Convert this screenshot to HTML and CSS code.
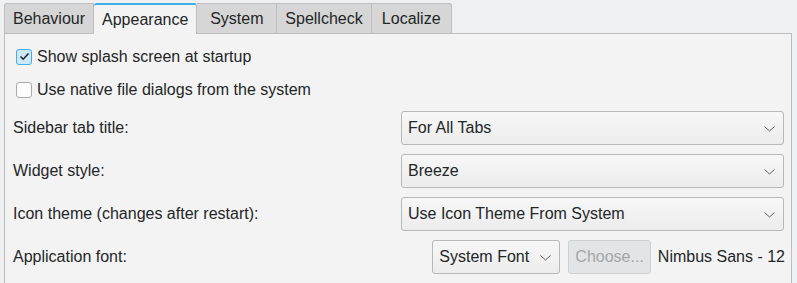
FILE: index.html
```html
<!DOCTYPE html>
<html lang="en">
<head>
    <meta charset="UTF-8">
    <title>Settings - Appearance</title>
    <link rel="stylesheet" href="styles.css">
</head>
<body>
    <div class="tabs">
        <div class="tab">Behaviour</div>
        <div class="tab active">Appearance</div>
        <div class="tab">System</div>
        <div class="tab">Spellcheck</div>
        <div class="tab">Localize</div>
    </div>

    <div class="panel">
        <label class="check">
            <span class="box checked">
                <svg width="11" height="9" viewBox="0 0 11 9"><path d="M1.5 4.5 L4.2 7.2 L9.5 1.5" fill="none" stroke="#232627" stroke-width="1.6"/></svg>
            </span>
            Show splash screen at startup
        </label>
        <label class="check">
            <span class="box"></span>
            Use native file dialogs from the system
        </label>

        <div class="form">
            <div class="row">
                <span class="label">Sidebar tab title:</span>
                <div class="combo wide">For All Tabs
                    <svg class="chevron" width="11" height="6" viewBox="0 0 11 6"><path d="M0.5 0.5 L5.5 5 L10.5 0.5" fill="none" stroke="#5c5e60" stroke-width="1"/></svg>
                </div>
            </div>
            <div class="row">
                <span class="label">Widget style:</span>
                <div class="combo wide">Breeze
                    <svg class="chevron" width="11" height="6" viewBox="0 0 11 6"><path d="M0.5 0.5 L5.5 5 L10.5 0.5" fill="none" stroke="#5c5e60" stroke-width="1"/></svg>
                </div>
            </div>
            <div class="row">
                <span class="label">Icon theme (changes after restart):</span>
                <div class="combo wide">Use Icon Theme From System
                    <svg class="chevron" width="11" height="6" viewBox="0 0 11 6"><path d="M0.5 0.5 L5.5 5 L10.5 0.5" fill="none" stroke="#5c5e60" stroke-width="1"/></svg>
                </div>
            </div>
            <div class="row">
                <span class="label">Application font:</span>
                <div class="combo small">System Font
                    <svg class="chevron" width="11" height="6" viewBox="0 0 11 6"><path d="M0.5 0.5 L5.5 5 L10.5 0.5" fill="none" stroke="#5c5e60" stroke-width="1"/></svg>
                </div>
                <div class="button disabled">Choose...</div>
                <span class="font-name">Nimbus Sans - 12</span>
            </div>
        </div>
    </div>
</body>
</html>
```

FILE: styles.css
```css
body {
    margin: 0;
    background-color: #eff0f1;
    font-family: "Liberation Sans", Arial, sans-serif;
    font-size: 16px;
    color: #232627;
    overflow: hidden;
}
.tabs {
    display: flex;
    align-items: flex-end;
    padding: 2px 0 0 4px;
    height: 31px;
}
.tab {
    height: 30px;
    line-height: 30px;
    min-width: 80px;
    text-align: center;
    padding: 0 8px;
    background-color: #d6d6d6;
    border: 1px solid #bdbdbd;
    border-bottom: none;
    border-left: none;
    box-sizing: border-box;
}
.tab:first-child {
    border-left: 1px solid #bdbdbd;
    border-top-left-radius: 3px;
}
.tab:last-child {
    border-top-right-radius: 3px;
}
.tab.active {
    height: 31px;
    line-height: 29px;
    background-color: #f3f3f3;
    border-top: 2px solid #3daee9;
    border-top-left-radius: 3px;
    border-top-right-radius: 3px;
    margin-bottom: -1px;
    position: relative;
}
.panel {
    margin-left: 4px;
    width: 788px;
    height: 260px;
    box-sizing: border-box;
    background-color: #f3f3f3;
    border: 1px solid #bdbdbd;
    padding: 6px 7px 0 8px;
}
.check {
    display: flex;
    align-items: center;
    height: 33px;
    padding-left: 3px;
}
.box {
    width: 16px;
    height: 16px;
    box-sizing: border-box;
    border: 1px solid #a9abad;
    border-radius: 3px;
    background-color: #fcfcfc;
    margin-right: 5px;
    display: flex;
    align-items: center;
    justify-content: center;
}
.box.checked {
    border-color: #3daee9;
    background-color: #cde8f6;
}
.form {
    margin-top: 5px;
    display: flex;
    flex-direction: column;
    gap: 9px;
}
.row {
    display: flex;
    align-items: center;
    height: 34px;
}
.label {
    flex: 1;
}
.combo {
    height: 34px;
    box-sizing: border-box;
    border: 1px solid #b7b8b9;
    border-radius: 3px;
    background: linear-gradient(#f7f7f7, #ececec);
    display: flex;
    align-items: center;
    padding-left: 6px;
    position: relative;
}
.combo.wide {
    width: 383px;
}
.combo.small {
    width: 128px;
}
.chevron {
    position: absolute;
    right: 8px;
    top: 14px;
}
.button {
    height: 34px;
    box-sizing: border-box;
    margin-left: 8px;
    padding: 0 6px;
    border: 1px solid #cfd0d1;
    border-radius: 3px;
    display: flex;
    align-items: center;
}
.button.disabled {
    background-color: #e3e4e5;
    color: #a3a5a6;
}
.font-name {
    margin-left: 7px;
    margin-right: -1px;
}
```
